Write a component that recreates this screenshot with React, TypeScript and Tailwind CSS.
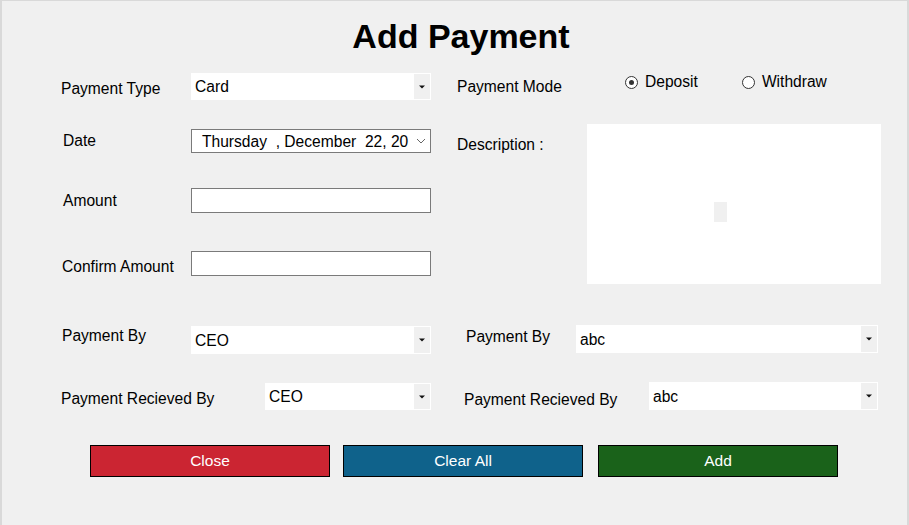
import React from "react";

const font = { fontFamily: '"Liberation Sans", Arial, sans-serif' };

function Combo({ value, w, h }: { value: string; w: string; h: string }) {
  return (
    <div className={`flex bg-white ${w} ${h}`}>
      <div className="flex-1 flex items-center pl-[4px] pt-[1px] text-[15.6px] leading-[20px] text-black">{value}</div>
      <div className="w-[16px] my-[1px] mr-[1px] bg-[#f0f0f0] flex items-center justify-center">
        <svg width="6" height="4" viewBox="0 0 6 4">
          <path d="M0 0.5 H6 L3 3.5 Z" fill="#111" />
        </svg>
      </div>
    </div>
  );
}

function TextBox({ h }: { h: string }) {
  return <div className={`w-[240px] ${h} bg-white border border-[#7a7a7a]`} />;
}

function Radio({ checked, label }: { checked?: boolean; label: string }) {
  return (
    <div className="flex items-center h-[20px]">
      <span className="w-[13px] h-[13px] rounded-full border border-[#333] bg-white flex items-center justify-center">
        {checked && <span className="w-[5px] h-[5px] rounded-full bg-[#333]" />}
      </span>
      <span className="ml-[7px] text-[15.6px] leading-[20px]">{label}</span>
    </div>
  );
}

export default function App() {
  return (
    <div
      style={font}
      className="w-[909px] h-[525px] overflow-hidden bg-[#f0f0f0] text-black text-[15.6px] shadow-[inset_2px_1px_0_#d9d9d9,inset_-2px_0_0_#d9d9d9]"
    >
      <h1 className="pt-[16px] pl-[13px] text-center text-[34px] leading-[40px] font-bold">Add Payment</h1>

      {/* top section */}
      <div className="flex">
        <div className="ml-[61px] w-[370px] flex flex-col">
          <div className="mt-[17px] h-[27px] flex items-center">
            <span className="w-[130px] pt-[4px] leading-[20px]">Payment Type</span>
            <Combo value="Card" w="w-[240px]" h="h-[27px]" />
          </div>

          <div className="mt-[29px] h-[24px] flex items-center">
            <span className="ml-[2px] w-[128px] leading-[20px]">Date</span>
            <div className="w-[240px] h-[24px] bg-white border border-[#7a7a7a] flex items-center">
              <span className="ml-[10px] w-[213px] whitespace-pre leading-[20px] pt-[1px]">
                {"Thursday  , December  22, 20"}
              </span>
              <svg className="ml-[1px]" width="10" height="6" viewBox="0 0 10 6">
                <path d="M1 1 L5 5 L9 1" stroke="#666" strokeWidth="1" fill="none" />
              </svg>
            </div>
          </div>

          <div className="mt-[35px] h-[25px] flex items-center">
            <span className="ml-[2px] w-[128px] leading-[20px]">Amount</span>
            <TextBox h="h-[25px]" />
          </div>

          <div className="mt-[38px] h-[25px] flex items-center">
            <span className="ml-[1px] w-[129px] pt-[6px] leading-[20px]">Confirm Amount</span>
            <TextBox h="h-[25px]" />
          </div>
        </div>

        <div className="ml-[26px] w-[424px] flex flex-col">
          <div className="flex items-start">
            <span className="mt-[21px] w-[168px] leading-[20px]">Payment Mode</span>
            <div className="mt-[16px] flex">
              <Radio checked label="Deposit" />
              <div className="ml-[44px]">
                <Radio label="Withdraw" />
              </div>
            </div>
          </div>

          <div className="mt-[27px] flex items-start">
            <span className="mt-[11px] w-[130px] leading-[20px]">Description :</span>
            <div className="relative w-[294px] h-[160px] bg-white">
              <span className="absolute left-[127px] top-[78px] w-[13px] h-[20px] bg-[#f0f0f0]" />
            </div>
          </div>
        </div>
      </div>

      {/* payment by */}
      <div className="mt-[41px] flex items-start">
        <span className="ml-[62px] mt-[1px] w-[129px] leading-[20px]">Payment By</span>
        <div className="mt-[1px]">
          <Combo value="CEO" w="w-[240px]" h="h-[28px]" />
        </div>
        <span className="ml-[35px] mt-[2px] w-[110px] leading-[20px]">Payment By</span>
        <Combo value="abc" w="w-[302px]" h="h-[28px]" />
      </div>

      {/* received by */}
      <div className="mt-[28px] flex items-start">
        <span className="ml-[61px] mt-[7px] w-[204px] leading-[20px]">Payment Recieved By</span>
        <div className="mt-[1px]">
          <Combo value="CEO" w="w-[166px]" h="h-[27px]" />
        </div>
        <span className="ml-[33px] mt-[8px] w-[185px] leading-[20px]">Payment Recieved By</span>
        <Combo value="abc" w="w-[229px]" h="h-[28px]" />
      </div>

      {/* buttons */}
      <div className="mt-[35px] flex">
        <button className="ml-[90px] w-[240px] h-[32px] bg-[#cb2532] border border-black text-white text-[15.5px]">Close</button>
        <button className="ml-[13px] w-[240px] h-[32px] bg-[#0f628b] border border-black text-white text-[15.5px]">Clear All</button>
        <button className="ml-[15px] w-[240px] h-[32px] bg-[#1a621a] border border-black text-white text-[15.5px]">Add</button>
      </div>
    </div>
  );
}
